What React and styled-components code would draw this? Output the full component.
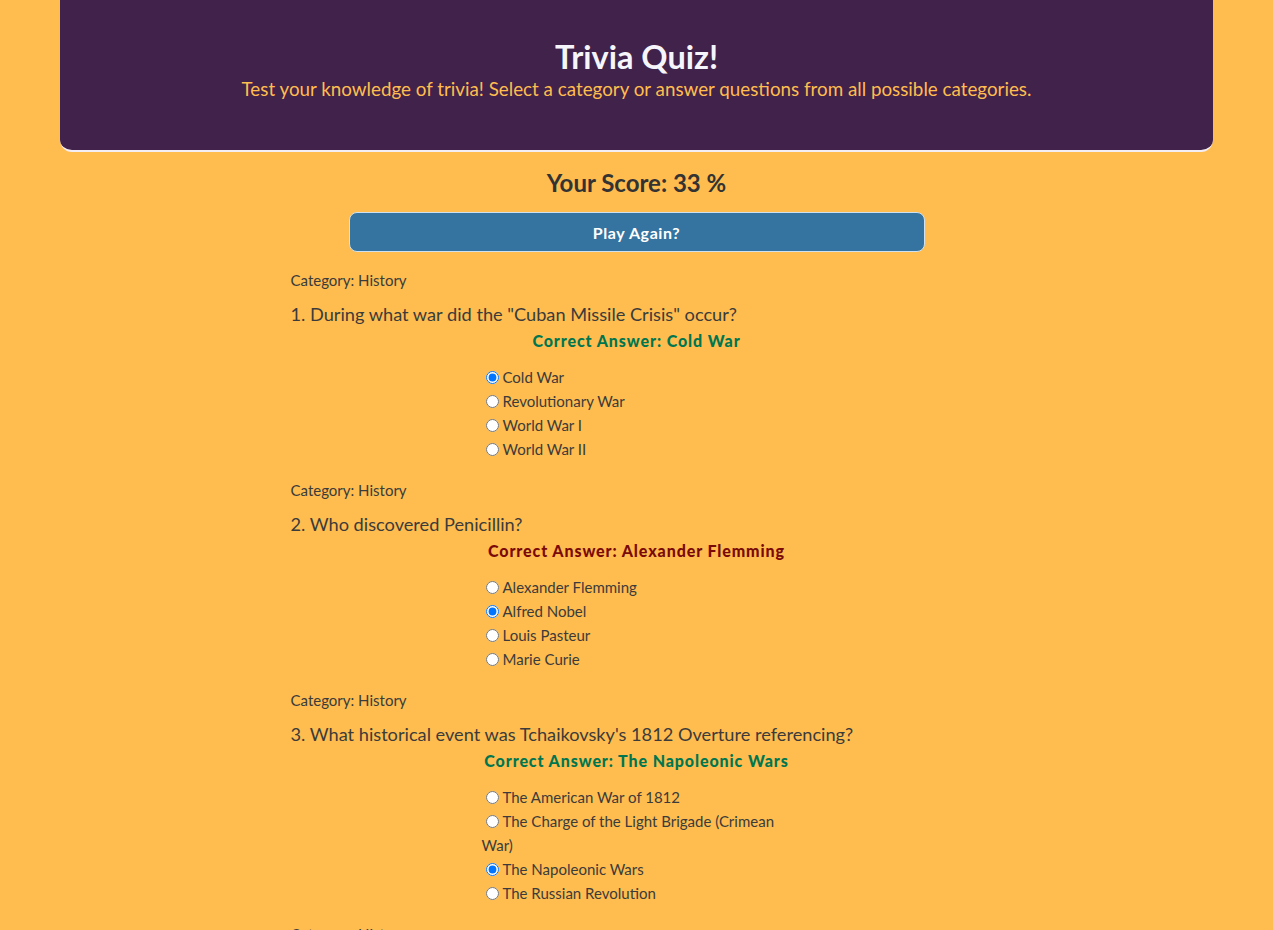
import React from "react"
import styled, { createGlobalStyle } from "styled-components"

const GlobalStyle = createGlobalStyle`
  body {
    margin: 0;
    background: #ffbd4f;
    font-family: "Lato", "Open Sans", sans-serif;
    color: #3b3b3b;
  }
`

const Page = styled.div`
  min-height: 930px;
  padding: 0 60px;
`

const Header = styled.header`
  background: #41224a;
  border-bottom: 2px solid #f3eef6;
  border-radius: 0 0 12px 12px;
  text-align: center;
  padding-top: 38px;
  box-sizing: border-box;
  height: 152px;
`

const Title = styled.h1`
  margin: 0;
  font-size: 32.5px;
  font-weight: 700;
  color: #f6f5fb;
  line-height: 38px;
`

const Subtitle = styled.p`
  margin: 0;
  font-size: 18.8px;
  color: #ffbd4f;
  line-height: 26px;
`

const Score = styled.h2`
  margin: 16px 0 0;
  text-align: center;
  font-size: 24px;
  font-weight: 700;
  color: #333;
  line-height: 30px;
`

const PlayButton = styled.button`
  display: block;
  width: 576px;
  height: 40px;
  margin: 14px auto 0;
  background: #3574a0;
  border: 1px solid #cfe0ee;
  border-radius: 8px;
  color: #ffffff;
  font-family: inherit;
  font-weight: 700;
  font-size: 16px;
  letter-spacing: 0.6px;
  cursor: pointer;
`

const QuizList = styled.div`
  width: 692px;
  margin: 18px auto 0;
  display: flex;
  flex-direction: column;
  gap: 19px;
`

const QuestionBlock = styled.section``

const Category = styled.div`
  font-size: 15px;
  line-height: 20px;
`

const QuestionText = styled.div`
  margin-top: 12px;
  font-size: 18.2px;
  line-height: 24px;
`

const CorrectAnswer = styled.div`
  margin-top: 4px;
  text-align: center;
  font-weight: 900;
  font-size: 16px;
  letter-spacing: 0.9px;
  line-height: 22px;
  color: ${p => (p.$right ? "#007650" : "#7a0a08")};
`

const Options = styled.div`
  width: 310px;
  margin: 13px auto 0;
`

const OptionRow = styled.label`
  display: block;
  font-size: 15px;
  line-height: 24px;
  input {
    margin: 0 4px 0 4px;
    vertical-align: -1px;
  }
`

const questions = [
  {
    category: "History",
    text: 'During what war did the "Cuban Missile Crisis" occur?',
    answer: "Cold War",
    options: ["Cold War", "Revolutionary War", "World War I", "World War II"],
    picked: 0,
  },
  {
    category: "History",
    text: "Who discovered Penicillin?",
    answer: "Alexander Flemming",
    options: ["Alexander Flemming", "Alfred Nobel", "Louis Pasteur", "Marie Curie"],
    picked: 1,
  },
  {
    category: "History",
    text: "What historical event was Tchaikovsky's 1812 Overture referencing?",
    answer: "The Napoleonic Wars",
    options: [
      "The American War of 1812",
      "The Charge of the Light Brigade (Crimean War)",
      "The Napoleonic Wars",
      "The Russian Revolution",
    ],
    picked: 2,
  },
  {
    category: "History",
    text: "In which year did the Berlin Wall fall?",
    answer: "1989",
    options: ["1987", "1989", "1991", "1993"],
    picked: 1,
  },
]

const App = () => {
  return (
    <Page>
      <GlobalStyle />
      <Header>
        <Title>Trivia Quiz!</Title>
        <Subtitle>
          Test your knowledge of trivia! Select a category or answer questions from all possible categories.
        </Subtitle>
      </Header>
      <Score>Your Score: 33 %</Score>
      <PlayButton>Play Again?</PlayButton>
      <QuizList>
        {questions.map((q, i) => (
          <QuestionBlock key={i}>
            <Category>Category: {q.category}</Category>
            <QuestionText>
              {i + 1}. {q.text}
            </QuestionText>
            <CorrectAnswer $right={q.options[q.picked] === q.answer}>
              Correct Answer: {q.answer}
            </CorrectAnswer>
            <Options>
              {q.options.map((opt, j) => (
                <OptionRow key={j}>
                  <input type="radio" name={"q" + i} defaultChecked={j === q.picked} />
                  {opt}
                </OptionRow>
              ))}
            </Options>
          </QuestionBlock>
        ))}
      </QuizList>
    </Page>
  )
}

export default App
